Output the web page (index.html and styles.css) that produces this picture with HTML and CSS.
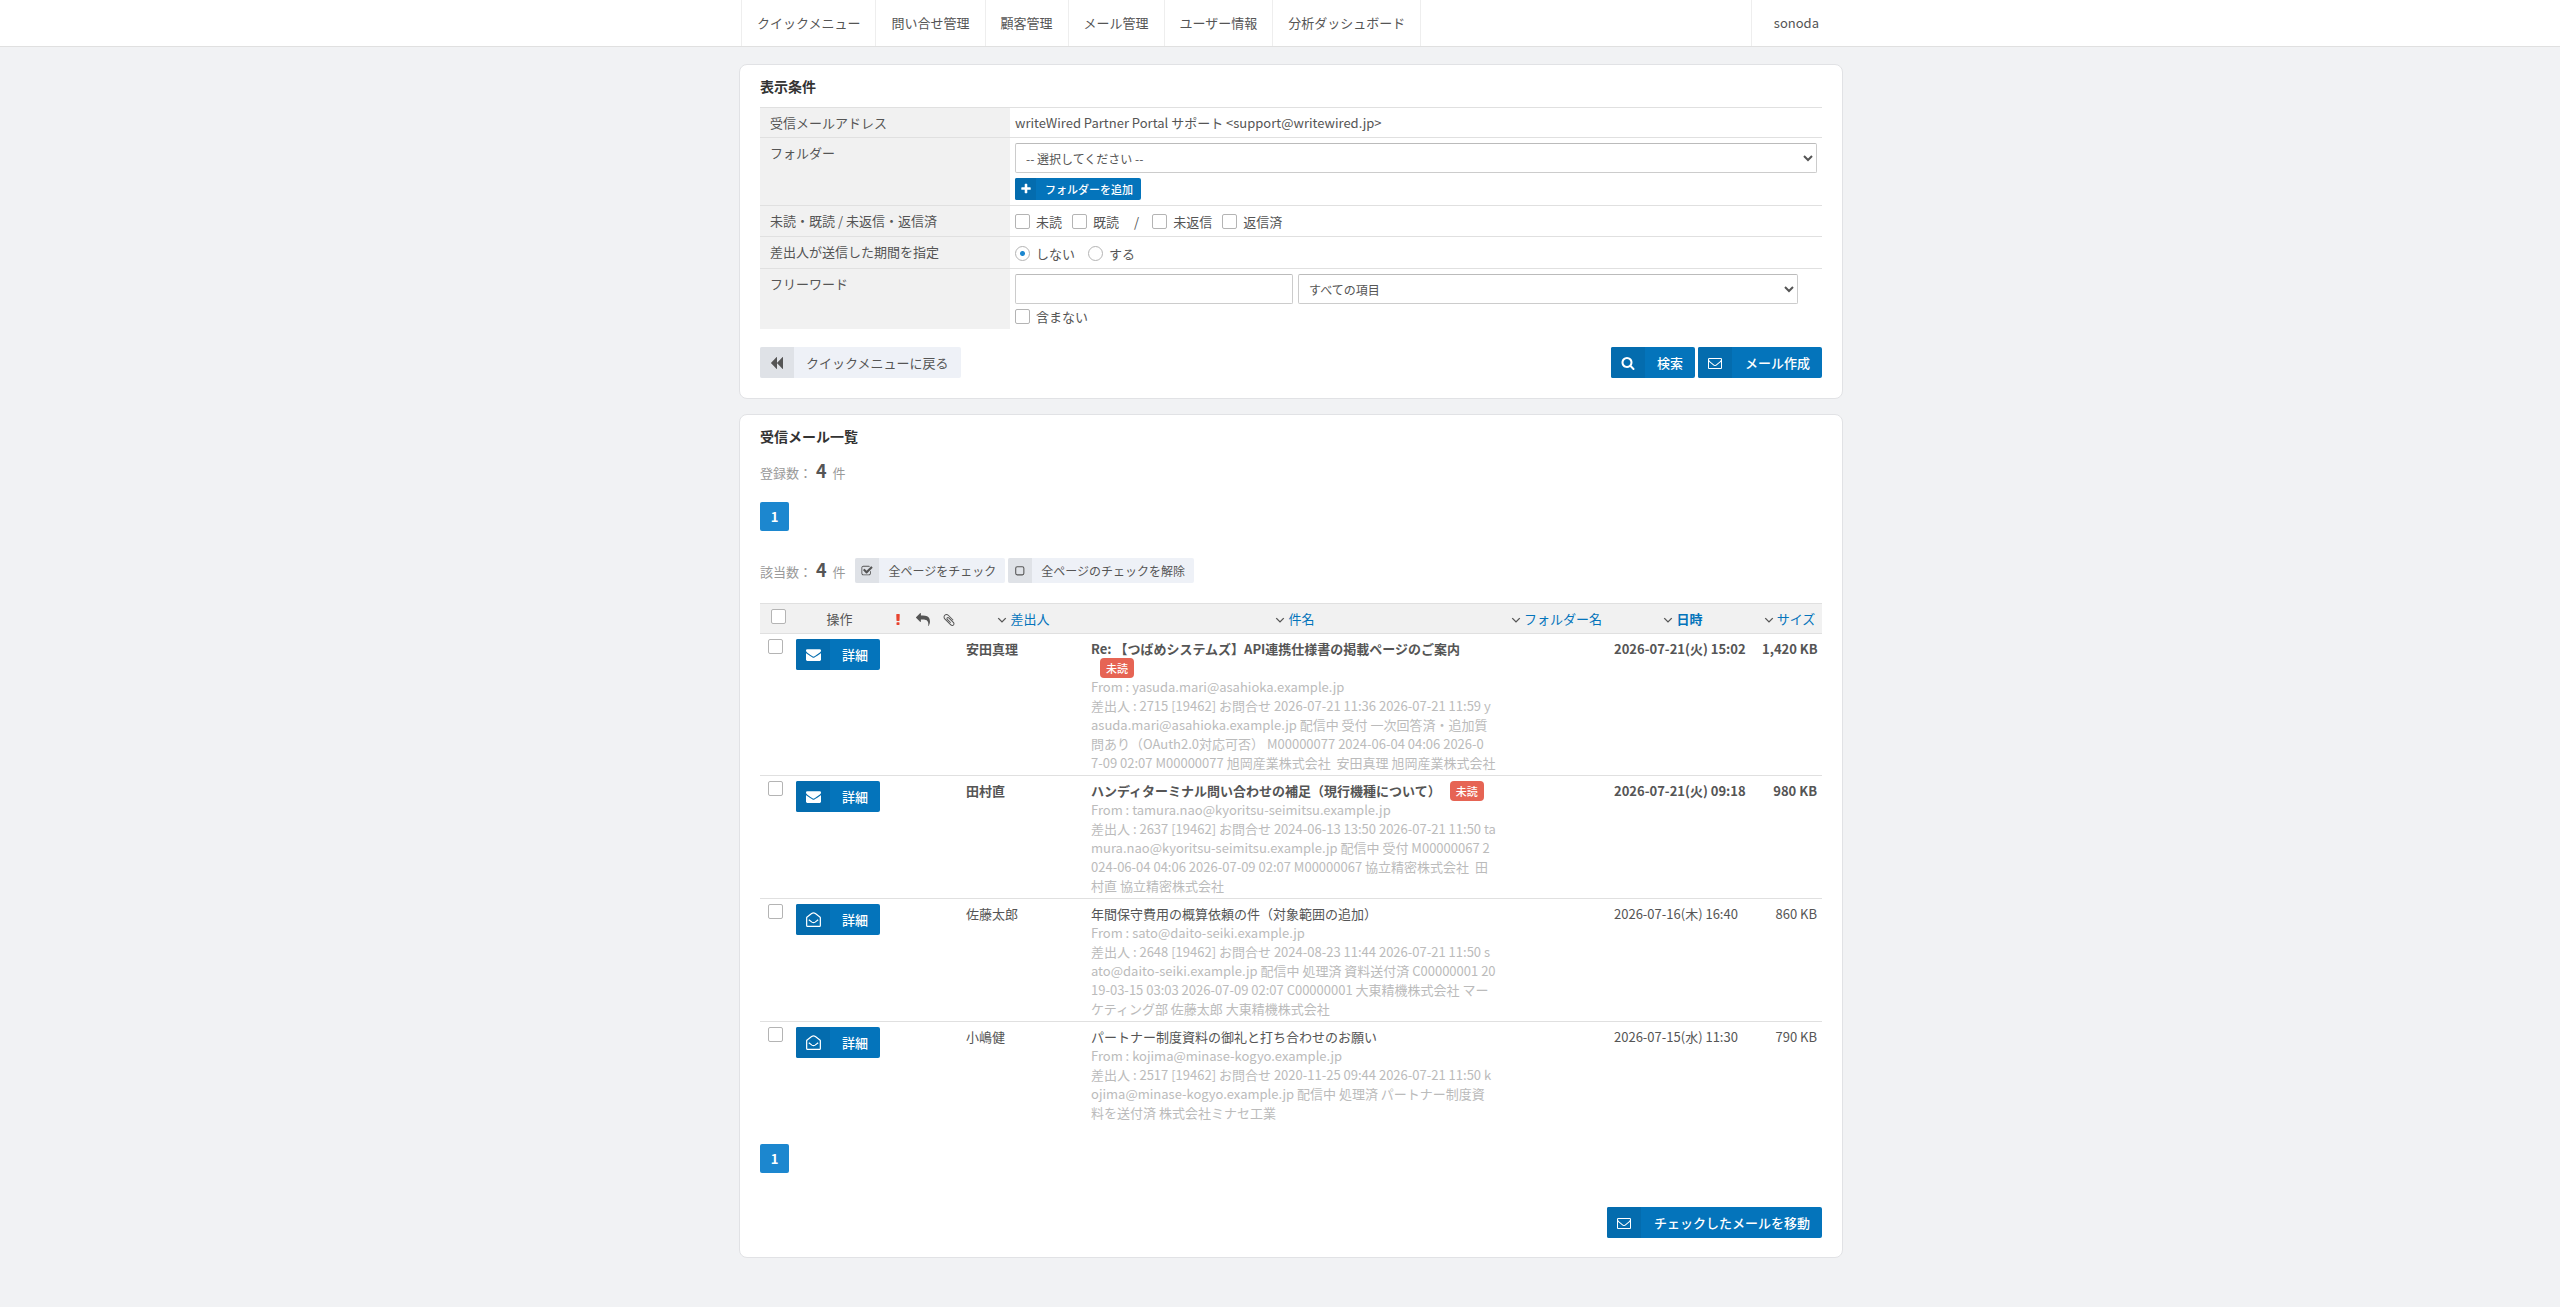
FILE: index.html
```html
<!DOCTYPE html>
<html lang="ja">
<head>
<meta charset="utf-8">
<title>受信メール一覧</title>
<link rel="stylesheet" href="styles.css">
</head>
<body>
<svg class="sprite" aria-hidden="true">
  <symbol id="i-search" viewBox="0 0 1792 1792"><path d="M1216 832q0-185-131.500-316.500t-316.500-131.500-316.500 131.500-131.500 316.500 131.500 316.500 316.500 131.500 316.500-131.500 131.500-316.500zm512 832q0 52-38 90t-90 38q-54 0-90-38l-343-342q-179 124-399 124-143 0-273.500-55.500t-225-150-150-225-55.500-273.500 55.500-273.500 150-225 225-150 273.500-55.500 273.500 55.500 225 150 150 225 55.500 273.500q0 220-124 399l343 343q37 37 37 90z"/></symbol>
  <symbol id="i-mail" viewBox="0 0 1792 1792"><path d="M1792 710v794q0 66-47 113t-113 47h-1472q-66 0-113-47t-47-113v-794q44 49 101 87 362 246 497 345 57 42 92.500 65.500t94.500 48 110 24.500h2q51 0 110-24.500t94.500-48 92.500-65.500q170-123 498-345 57-39 100-87zm0-294q0 79-49 151t-122 123q-376 261-468 325-10 7-42.500 31t-54 38.500-52 32.500-57.500 27-50 9h-2q-23 0-50-9t-57.500-27-52-32.500-54-38.500-42.500-31q-91-64-262-182.500t-205-142.500q-62-42-117-115.500t-55-136.500q0-78 41.500-130t118.500-52h1472q65 0 112.500 47t47.500 113z"/></symbol>
  <symbol id="i-mail-o" viewBox="0 0 1792 1792"><path d="M1664 1504v-768q-32 36-69 66-268 206-426 338-51 43-83 67t-86.500 48.500-102.500 24.500h-2q-48 0-102.500-24.500t-86.500-48.500-83-67q-158-132-426-338-37-30-69-66v768q0 13 9.500 22.500t22.500 9.500h1472q13 0 22.500-9.500t9.500-22.500zm0-1051v-24.500l-.5-13-3-12.500-5.500-9-9-7.500-14-2.500h-1472q-13 0-22.500 9.500t-9.500 22.500q0 168 147 284 193 152 401 317 6 5 35 29.500t46 37.500 44.500 31.500 50.500 27.500 43 9h2q20 0 43-9t50.500-27.500 44.500-31.500 46-37.500 35-29.500q208-165 401-317 54-43 100.500-115.500t46.500-131.500zm128-37v1088q0 66-47 113t-113 47h-1472q-66 0-113-47t-47-113v-1088q0-66 47-113t113-47h1472q66 0 113 47t47 113z"/></symbol>
  <symbol id="i-mail-open" viewBox="0 0 16 16"><path d="M.7 14.300V6.200Q.7 5.700 1.200 5.300L6 1.600Q8 .2 10 1.600L14.800 5.300Q15.300 5.700 15.300 6.200V14.300Q15.300 15.300 14.300 15.300H1.700Q.7 15.300.7 14.300ZM3 8.200L6.300 10.800Q8 12 9.700 10.800L13 8.200" fill="none" stroke="currentColor" stroke-width="1.300"/></symbol>
  <symbol id="i-plus" viewBox="0 0 1792 1792"><path d="M1600 736v192q0 40-28 68t-68 28h-416v416q0 40-28 68t-68 28h-192q-40 0-68-28t-28-68v-416h-416q-40 0-68-28t-28-68v-192q0-40 28-68t68-28h416v-416q0-40 28-68t68-28h192q40 0 68 28t28 68v416h416q40 0 68 28t28 68z"/></symbol>
  <symbol id="i-backward" viewBox="0 0 1792 1792"><path d="M1619 141q19-19 32-13t13 32v1472q0 26-13 32t-32-13l-710-710q-9-9-13-19v710q0 26-13 32t-32-13l-710-710q-19-19-19-45t19-45l710-710q19-19 32-13t13 32v710q4-10 13-19z"/></symbol>
  <symbol id="i-check" viewBox="0 0 1792 1792"><path d="M1472 930v318q0 119-84.500 203.500t-203.500 84.500h-832q-119 0-203.500-84.500t-84.500-203.500v-832q0-119 84.500-203.500t203.500-84.500h832q63 0 117 25 15 7 18 23 3 17-9 29l-49 49q-10 10-23 10-3 0-9-2-23-6-45-6h-832q-66 0-113 47t-47 113v832q0 66 47 113t113 47h832q66 0 113-47t47-113v-254q0-13 9-22l64-64q10-10 23-10 6 0 12 3 20 8 20 29zm231-489l-814 814q-24 24-57 24t-57-24l-430-430q-24-24-24-57t24-57l110-110q24-24 57-24t57 24l263 263 647-647q24-24 57-24t57 24l110 110q24 24 24 57t-24 57z"/></symbol>
  <symbol id="i-square" viewBox="0 0 1792 1792"><rect x="256" y="256" width="1216" height="1216" rx="224" fill="none" stroke="currentColor" stroke-width="160"/></symbol>
  <symbol id="i-alert" viewBox="0 0 1792 1792"><path d="M1088 1248v224q0 26-19 45t-45 19h-256q-26 0-45-19t-19-45v-224q0-26 19-45t45-19h256q26 0 45 19t19 45zm30-1056l-28 768q-1 26-20.500 45t-45.500 19h-256q-26 0-45.500-19t-20.500-45l-28-768q-1-26 17.500-45t44.500-19h320q26 0 44.500 19t17.500 45z"/></symbol>
  <symbol id="i-reply" viewBox="0 0 1792 1792"><path d="M1792 1120q0 166-127 451-3 7-10.500 24t-13.500 30-13 22q-12 17-28 17-15 0-23.500-10t-8.500-25q0-9 2.500-26.500t2.500-23.500q5-68 5-123 0-112-19.500-200.500t-54-153.500-89-112-117-80.500-137.500-50.500-152-23.500-159.500-6.500h-224v256q0 26-19 45t-45 19-45-19l-512-512q-19-19-19-45t19-45l512-512q19-19 45-19t45 19 19 45v256h224q713 0 875 403 53 134 53 333z"/></symbol>
  <symbol id="i-clip" viewBox="0 0 1792 1792"><path d="M1596 1385q0 117-79 196t-196 79q-135 0-235-100l-777-776q-113-115-113-271 0-159 110-270t269-111q158 0 273 113l605 606q10 10 10 22 0 16-30.500 46.500t-46.500 30.500q-13 0-23-10l-606-607q-79-77-181-77-106 0-179 75t-73 181q0 105 76 181l776 777q63 63 145 63 64 0 106-42t42-106q0-82-63-145l-581-581q-26-24-60-24-29 0-48 19t-19 48q0 32 25 59l410 410q10 10 10 22 0 16-31 47t-47 31q-12 0-22-10l-410-410q-63-61-63-149 0-82 57-139t139-57q88 0 149 63l581 581q100 98 100 235z"/></symbol>
  <symbol id="i-chev" viewBox="0 0 8 8"><path d="M1 2.500L4 5.500L7 2.500" fill="none" stroke="currentColor" stroke-width="1.100"/></symbol>
</svg>

<header class="topbar">
  <nav class="wrap nav">
    <a href="#">クイックメニュー</a>
    <a href="#">問い合せ管理</a>
    <a href="#">顧客管理</a>
    <a href="#">メール管理</a>
    <a href="#">ユーザー情報</a>
    <a href="#" class="nav-last">分析ダッシュボード</a>
    <a href="#" class="nav-user">sonoda</a>
  </nav>
</header>

<main class="wrap">
  <section class="card">
    <h2>表示条件</h2>
    <form>
      <table class="cond">
        <tr><th>受信メールアドレス</th><td>writeWired Partner Portal サポート &lt;support@writewired.jp&gt;</td></tr>
        <tr><th><label for="folder">フォルダー</label></th><td>
          <select id="folder" class="field field-full"><option>-- 選択してください --</option></select>
          <button type="button" class="btn btn-mini"><span class="ico"><svg><use href="#i-plus"/></svg></span><span class="lbl">フォルダーを追加</span></button>
        </td></tr>
        <tr><th>未読・既読 / 未返信・返信済</th><td>
          <div class="checks">
            <label><input type="checkbox">未読</label>
            <label><input type="checkbox">既読</label>
            <span class="slash">/</span>
            <label><input type="checkbox">未返信</label>
            <label><input type="checkbox">返信済</label>
          </div>
        </td></tr>
        <tr><th>差出人が送信した期間を指定</th><td>
          <div class="checks radios">
            <label><input type="radio" name="period" checked>しない</label>
            <label><input type="radio" name="period">する</label>
          </div>
        </td></tr>
        <tr><th><label for="word">フリーワード</label></th><td>
          <div class="words">
            <input type="text" id="word" class="field field-word">
            <select class="field field-target" aria-label="検索対象"><option>すべての項目</option></select>
          </div>
          <div class="checks"><label><input type="checkbox">含まない</label></div>
        </td></tr>
      </table>
      <div class="actions">
        <button type="button" class="btn btn-light"><span class="ico"><svg><use href="#i-backward"/></svg></span><span class="lbl">クイックメニューに戻る</span></button>
        <div class="right">
          <button type="button" class="btn"><span class="ico"><svg><use href="#i-search"/></svg></span><span class="lbl">検索</span></button>
          <button type="button" class="btn btn-wide"><span class="ico"><svg><use href="#i-mail-o"/></svg></span><span class="lbl">メール作成</span></button>
        </div>
      </div>
    </form>
  </section>

  <section class="card list">
    <h2>受信メール一覧</h2>
    <p class="count">登録数： <strong>4</strong> 件</p>
    <nav class="pager"><a href="#">1</a></nav>
    <div class="hits">
      <p class="count">該当数： <strong>4</strong> 件</p>
      <button type="button" class="btn btn-light btn-small"><span class="ico"><svg><use href="#i-check"/></svg></span><span class="lbl">全ページをチェック</span></button>
      <button type="button" class="btn btn-light btn-small"><span class="ico"><svg><use href="#i-square"/></svg></span><span class="lbl">全ページのチェックを解除</span></button>
    </div>
    <table class="mails">
      <colgroup><col class="c-check"><col class="c-op"><col class="c-alert"><col class="c-reply"><col class="c-clip"><col class="c-from"><col><col class="c-folder"><col class="c-date"><col class="c-size"></colgroup>
      <thead>
        <tr>
          <th class="th-check"><input type="checkbox" aria-label="すべて選択"></th>
          <th>操作</th>
          <th class="tight alert"><svg><use href="#i-alert"/></svg></th>
          <th class="tight"><svg><use href="#i-reply"/></svg></th>
          <th class="tight"><svg><use href="#i-clip"/></svg></th>
          <th><svg class="chev"><use href="#i-chev"/></svg><a href="#">差出人</a></th>
          <th><svg class="chev"><use href="#i-chev"/></svg><a href="#">件名</a></th>
          <th><svg class="chev"><use href="#i-chev"/></svg><a href="#">フォルダー名</a></th>
          <th><svg class="chev"><use href="#i-chev"/></svg><a href="#" class="current">日時</a></th>
          <th><svg class="chev"><use href="#i-chev"/></svg><a href="#">サイズ</a></th>
        </tr>
      </thead>
      <tbody>
        <tr class="unread">
          <td class="td-check"><input type="checkbox" aria-label="選択"></td>
          <td><button type="button" class="btn"><span class="ico"><svg><use href="#i-mail"/></svg></span><span class="lbl">詳細</span></button></td>
          <td></td><td></td><td></td>
          <td>安田真理</td>
          <td class="subject">Re: 【つばめシステムズ】API連携仕様書の掲載ページのご案内<span class="badge">未読</span>
            <p>From : yasuda.mari@asahioka.example.jp<br>差出人 : 2715 [19462] お問合せ 2026-07-21 11:36 2026-07-21 11:59 y<br>asuda.mari@asahioka.example.jp 配信中 受付 一次回答済・追加質<br>問あり（OAuth2.0対応可否） M00000077 2024-06-04 04:06 2026-0<br>7-09 02:07 M00000077 旭岡産業株式会社&nbsp; 安田真理 旭岡産業株式会社</p></td>
          <td></td>
          <td>2026-07-21(火) 15:02</td>
          <td class="size">1,420 KB</td>
        </tr>
        <tr class="unread">
          <td class="td-check"><input type="checkbox" aria-label="選択"></td>
          <td><button type="button" class="btn"><span class="ico"><svg><use href="#i-mail"/></svg></span><span class="lbl">詳細</span></button></td>
          <td></td><td></td><td></td>
          <td>田村直</td>
          <td class="subject">ハンディターミナル問い合わせの補足（現行機種について）<span class="badge">未読</span>
            <p>From : tamura.nao@kyoritsu-seimitsu.example.jp<br>差出人 : 2637 [19462] お問合せ 2024-06-13 13:50 2026-07-21 11:50 ta<br>mura.nao@kyoritsu-seimitsu.example.jp 配信中 受付 M00000067 2<br>024-06-04 04:06 2026-07-09 02:07 M00000067 協立精密株式会社&nbsp; 田<br>村直 協立精密株式会社</p></td>
          <td></td>
          <td>2026-07-21(火) 09:18</td>
          <td class="size">980 KB</td>
        </tr>
        <tr>
          <td class="td-check"><input type="checkbox" aria-label="選択"></td>
          <td><button type="button" class="btn"><span class="ico"><svg><use href="#i-mail-open"/></svg></span><span class="lbl">詳細</span></button></td>
          <td></td><td></td><td></td>
          <td>佐藤太郎</td>
          <td class="subject">年間保守費用の概算依頼の件（対象範囲の追加）
            <p>From : sato@daito-seiki.example.jp<br>差出人 : 2648 [19462] お問合せ 2024-08-23 11:44 2026-07-21 11:50 s<br>ato@daito-seiki.example.jp 配信中 処理済 資料送付済 C00000001 20<br>19-03-15 03:03 2026-07-09 02:07 C00000001 大東精機株式会社 マー<br>ケティング部 佐藤太郎 大東精機株式会社</p></td>
          <td></td>
          <td>2026-07-16(木) 16:40</td>
          <td class="size">860 KB</td>
        </tr>
        <tr>
          <td class="td-check"><input type="checkbox" aria-label="選択"></td>
          <td><button type="button" class="btn"><span class="ico"><svg><use href="#i-mail-open"/></svg></span><span class="lbl">詳細</span></button></td>
          <td></td><td></td><td></td>
          <td>小嶋健</td>
          <td class="subject">パートナー制度資料の御礼と打ち合わせのお願い
            <p>From : kojima@minase-kogyo.example.jp<br>差出人 : 2517 [19462] お問合せ 2020-11-25 09:44 2026-07-21 11:50 k<br>ojima@minase-kogyo.example.jp 配信中 処理済 パートナー制度資<br>料を送付済 株式会社ミナセ工業</p></td>
          <td></td>
          <td>2026-07-15(水) 11:30</td>
          <td class="size">790 KB</td>
        </tr>
      </tbody>
    </table>
    <nav class="pager pager-end"><a href="#">1</a></nav>
    <div class="right">
      <button type="button" class="btn btn-wide"><span class="ico"><svg><use href="#i-mail-o"/></svg></span><span class="lbl">チェックしたメールを移動</span></button>
    </div>
  </section>
</main>
</body>
</html>
```
FILE: styles.css
```css
* { box-sizing: border-box; }
body {
  margin: 0;
  background: #f1f2f4;
  color: #555;
  font: 13px/19px "Noto Sans CJK JP", sans-serif;
}
a { color: #0474bb; text-decoration: none; }
h2, p { margin: 0; }
h2 { font-size: 14px; line-height: 20px; color: #333; font-weight: 700; }
button, input, select { font: inherit; color: inherit; margin: 0; }
svg { fill: currentColor; }
.sprite { display: none; }

.topbar { background: #fff; border-bottom: 1px solid #e0e0e0; padding-left: 22px; }
.wrap { max-width: 1104px; margin: 0 auto; }
main.wrap { max-width: 1126px; padding-left: 22px; }
.nav { display: flex; padding: 0 1px 0 2px; }
.nav a { border-left: 1px solid #eee; color: #555; line-height: 46px; padding: 0 15px; height: 46px; }
.nav a.nav-last { border-right: 1px solid #eee; }
.nav a.nav-user { margin-left: auto; padding: 0 23px 0 22px; }

.card {
  background: #fff;
  border: 1px solid #e1e2e5;
  border-radius: 8px;
  margin: 17px 0 0;
  padding: 11px 20px 20px;
}
.list { margin: 15px 0 48px; padding-bottom: 19px; }
table { width: 100%; border-collapse: separate; border-spacing: 0; }
th { font-weight: 400; }

.cond { margin-top: 11px; }
.cond th, .cond td { border-top: 1px solid #e0e0e0; vertical-align: top; padding: 5px; }
.cond th { width: 250px; text-align: left; background: #f1f1f1; padding-left: 10px; }
.field {
  height: 30px;
  background: #fff;
  border: 1px solid #ccc;
  border-top-color: #bbb;
  border-radius: 2px;
  font-size: 12px;
  padding: 0 6px;
}
.field-full { display: block; width: 100%; margin-bottom: 5px; }
.words { display: flex; gap: 5px; margin-bottom: 4px; }
.field-word { flex: 0 1 278px; }
.field-target { flex: 0 1 500px; }

.checks { display: flex; align-items: center; gap: 10px; height: 20px; padding-top: 1px; }
.checks label { display: flex; align-items: center; gap: 6px; }
.radios { gap: 13px; height: 21px; }
.words + .checks { height: 16px; padding: 0; }
.slash { padding: 0 3px 0 5px; }
input[type="checkbox"], input[type="radio"] {
  appearance: none;
  display: block;
  flex: none;
  width: 15px;
  height: 15px;
  border: 1px solid #b4b4b4;
  border-radius: 2px;
  background: #fff;
}
input[type="radio"] { border-radius: 50%; }
input[type="radio"]:checked { background: radial-gradient(circle, #1c87cf 2px, #fff 3px); }

.btn {
  display: inline-flex;
  height: 31px;
  padding: 0;
  border: 0;
  border-radius: 2px;
  overflow: hidden;
  background: #0474bb;
  color: #fff;
  font-weight: 500;
  white-space: nowrap;
  vertical-align: top;
}
.ico { width: 34px; height: 100%; background: #046cae; display: flex; align-items: center; justify-content: center; }
.ico svg { width: 14px; height: 14px; }
.mails .ico svg { width: 15px; height: 15px; }
.lbl { padding: 0 12px; align-self: center; }
.btn-wide .lbl { padding-left: 13px; }
.btn-light { background: #eef1f7; color: #555; font-weight: 400; }
.btn-light .ico { background: #dfe2e7; }
.actions .btn-light .lbl { padding-right: 13px; }
.btn-small { height: 25px; font-size: 12px; }
.btn-small .ico { width: 24px; }
.btn-small .ico svg { width: 12px; height: 12px; }
.btn-small .lbl { padding: 0 9px; }
.btn-mini { height: 22px; font-size: 11px; }
.btn-mini .ico { width: 21px; }
.btn-mini .ico svg { width: 12px; height: 12px; }
.btn-mini .lbl { padding: 0 8px 0 9px; }
.actions { display: flex; justify-content: space-between; margin-top: 18px; }
.right { display: flex; justify-content: flex-end; gap: 3px; }

.count { color: #999; line-height: 24px; white-space: nowrap; }
.count strong { color: #555; font-size: 18px; padding: 0 3px 0 1px; }
.list > .count { margin-top: 12px; }
.pager { display: flex; margin: 17px 0 27px; }
.pager a { width: 29px; height: 29px; border-radius: 2px; background: #1c87cf; color: #fff; font-weight: 700; line-height: 30px; text-align: center; }
.pager-end { margin: 19px 0 34px; }
.hits { display: flex; gap: 3px; margin-bottom: 20px; }
.hits .count { padding-right: 7px; line-height: 22px; }

.mails { table-layout: fixed; }
.mails th { background: #f1f1f1; border: solid #e0e0e0; border-width: 1px 0; height: 31px; padding: 0 5px; white-space: nowrap; }
.mails td { vertical-align: top; padding: 5px 5px 3px; border-bottom: 1px solid #e0e0e0; white-space: nowrap; }
.mails tbody tr:last-child td { border-bottom: 0; }
.mails .th-check { padding: 0 0 4px 11px; }
.mails .td-check { padding-left: 8px; }
.mails .tight { padding: 0; }
.mails th svg { width: 14px; height: 14px; vertical-align: middle; }
.mails th .chev { width: 10px; height: 10px; margin-right: 3px; }
.alert { color: #e8442f; }
.current { font-weight: 700; }
.unread { font-weight: 700; }
.mails .size { text-align: right; }
.mails .subject { white-space: normal; }
.subject p { color: #bbb; font-weight: 400; white-space: nowrap; }
.badge {
  display: inline-block;
  height: 20px;
  margin: 0 0 -1px 9px;
  padding: 0 6px;
  border-radius: 4px;
  background: #e66454;
  color: #fff;
  font-size: 11px;
  font-weight: 500;
  line-height: 20px;
  vertical-align: top;
}
.c-check { width: 31px; }
.c-op { width: 97px; }
.c-alert { width: 20px; }
.c-reply { width: 29px; }
.c-clip { width: 24px; }
.c-from { width: 125px; }
.c-folder { width: 105px; }
.c-date { width: 148px; }
.c-size { width: 65px; }
```
